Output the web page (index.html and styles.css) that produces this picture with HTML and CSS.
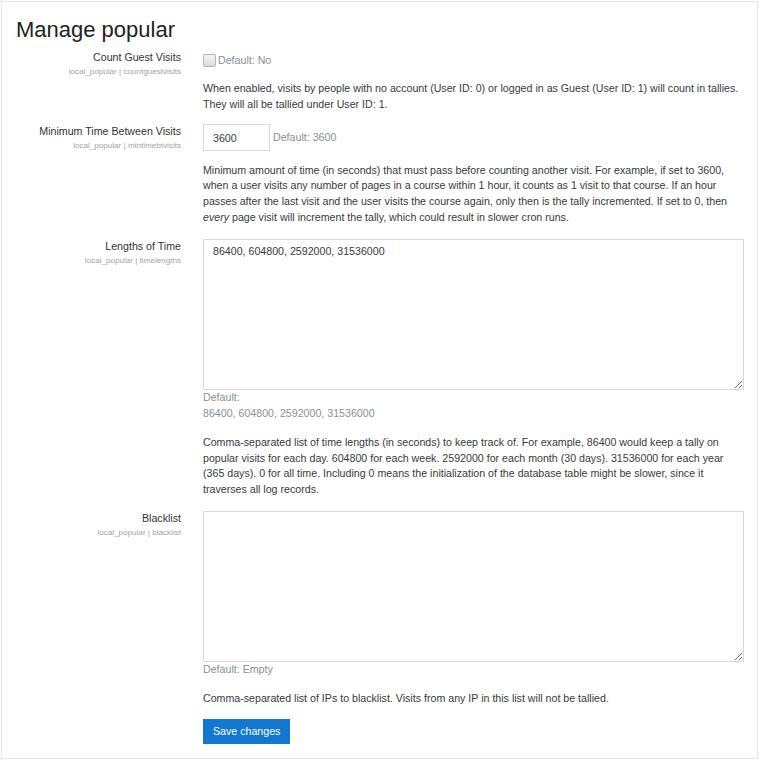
FILE: index.html
```html
<!DOCTYPE html>
<html lang="en">
<head>
<meta charset="utf-8">
<title>Manage popular</title>
<link rel="stylesheet" href="styles.css">
</head>
<body>
<div class="page">
  <h2 class="title">Manage popular</h2>
  <form class="settings">
    <div class="form-item">
      <div class="form-label">
        <label>Count Guest Visits</label>
        <span class="shortname">local_popular | countguestvisits</span>
      </div>
      <div class="form-setting">
        <div class="checkline"><input type="checkbox" class="check"><span class="default">Default: No</span></div>
        <div class="desc">When enabled, visits by people with no account (User ID: 0) or logged in as Guest (User ID: 1) will count in tallies. They will all be tallied under User ID: 1.</div>
      </div>
    </div>
    <div class="form-item">
      <div class="form-label">
        <label>Minimum Time Between Visits</label>
        <span class="shortname">local_popular | mintimebtvisits</span>
      </div>
      <div class="form-setting">
        <div class="textline"><input type="text" class="text" value="3600"><span class="default">Default: 3600</span></div>
        <div class="desc">Minimum amount of time (in seconds) that must pass before counting another visit. For example, if set to 3600, when a user visits any number of pages in a course within 1 hour, it counts as 1 visit to that course. If an hour passes after the last visit and the user visits the course again, only then is the tally incremented. If set to 0, then <em>every</em> page visit will increment the tally, which could result in slower cron runs.</div>
      </div>
    </div>
    <div class="form-item">
      <div class="form-label">
        <label>Lengths of Time</label>
        <span class="shortname">local_popular | timelengths</span>
      </div>
      <div class="form-setting">
        <textarea class="area">86400, 604800, 2592000, 31536000</textarea>
        <div class="default block">Default:<br>86400, 604800, 2592000, 31536000</div>
        <div class="desc">Comma-separated list of time lengths (in seconds) to keep track of. For example, 86400 would keep a tally on popular visits for each day. 604800 for each week. 2592000 for each month (30 days). 31536000 for each year (365 days). 0 for all time. Including 0 means the initialization of the database table might be slower, since it traverses all log records.</div>
      </div>
    </div>
    <div class="form-item last">
      <div class="form-label">
        <label>Blacklist</label>
        <span class="shortname">local_popular | blacklist</span>
      </div>
      <div class="form-setting">
        <textarea class="area"></textarea>
        <div class="default block">Default: Empty</div>
        <div class="desc">Comma-separated list of IPs to blacklist. Visits from any IP in this list will not be tallied.</div>
      </div>
    </div>
    <div class="form-buttons">
      <button type="button" class="btn">Save changes</button>
    </div>
  </form>
</div>
</body>
</html>
```

FILE: styles.css
```css
html, body {
  margin: 0;
  padding: 0;
  background: #fff;
}
body {
  font-family: "Liberation Sans", Arial, sans-serif;
  font-size: 10.65px;
  line-height: 15.75px;
  color: #373a3c;
}
.page {
  box-sizing: border-box;
  width: 757px;
  margin: 1px 0 0 1px;
  border: 1px solid #e6e6e6;
  padding: 15px 13px 14px 14px;
}
.title {
  margin: 0 0 7px 0;
  font-size: 22px;
  line-height: 26px;
  font-weight: normal;
  color: #222;
}
.settings {
  margin: 0;
}
.form-item {
  display: grid;
  grid-template-columns: 165px 541px;
  column-gap: 22px;
  margin-bottom: 11.5px;
}
.form-label {
  text-align: right;
}
.form-label label {
  display: block;
  color: #333;
}
.shortname {
  display: block;
  font-size: 8.1px;
  line-height: 12px;
  color: #a0a4a8;
}
.checkline {
  display: flex;
  align-items: center;
  padding-top: 3px;
  height: 15.75px;
}
.check {
  appearance: none;
  -webkit-appearance: none;
  box-sizing: border-box;
  width: 13px;
  height: 13px;
  margin: 0 2px 0 0;
  border: 1px solid #b5b5b5;
  border-radius: 2px;
  background: linear-gradient(#f4f4f4, #dcdcdc);
}
.default {
  color: #8a8f94;
}
.textline {
  display: flex;
  align-items: center;
  gap: 3px;
  height: 27px;
}
.text {
  box-sizing: border-box;
  width: 67px;
  height: 27px;
  margin: 0;
  padding: 0 9px;
  border: 1px solid #d9d9d9;
  font-family: inherit;
  font-size: 10.65px;
  color: #373a3c;
  outline: none;
}
.area {
  display: block;
  box-sizing: border-box;
  width: 541px;
  height: 151px;
  margin: 0;
  padding: 4px 9px;
  border: 1px solid #d9d9d9;
  font-family: inherit;
  font-size: 10.65px;
  line-height: 15.75px;
  color: #373a3c;
  outline: none;
}
.block {
  display: block;
}
.desc {
  margin-top: 12.25px;
}
.textline + .desc {
  margin-top: 11.5px;
}
.block + .desc {
  margin-top: 13.5px;
}
.form-item:nth-child(2),
.form-item:nth-child(3) {
  margin-bottom: 13.25px;
}
.form-item.last {
  margin-bottom: 11.5px;
}
.form-buttons {
  padding-left: 187px;
}
.btn {
  box-sizing: border-box;
  height: 25px;
  padding: 0 10px;
  border: none;
  border-radius: 0;
  background: #1177d1;
  color: #fff;
  font-family: inherit;
  font-size: 10.65px;
  cursor: pointer;
}
```
